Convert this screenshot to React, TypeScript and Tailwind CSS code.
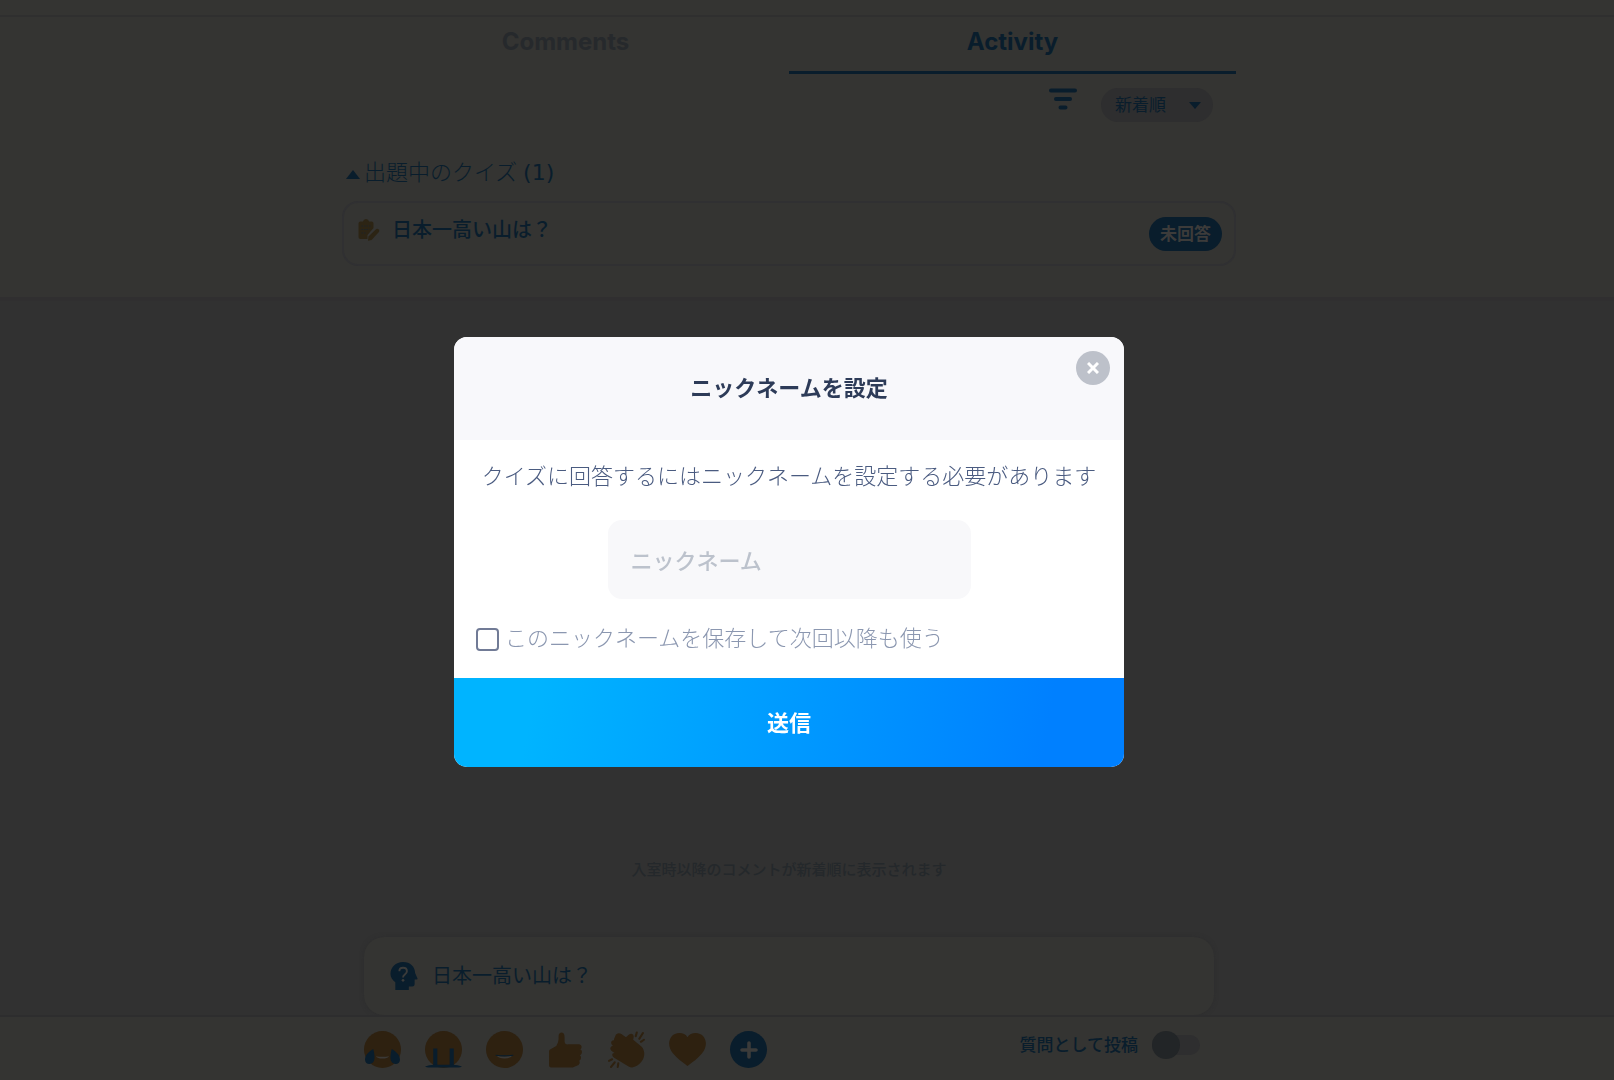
import React from "react";

const reactions = ["tears of joy", "crying", "smile", "thumbs up", "clap", "heart"];

const FACE = "#2e2110";
const BLUE = "#091d2c";

function Reaction({ name }: { name: string }) {
  return (
    <svg viewBox="0 0 36 36" className="size-[37px]" aria-hidden="true">
      {name === "tears of joy" && (
        <>
          <circle cx="18" cy="18" r="18" fill={FACE} />
          <path d="M11.500 24.500q6.500 1 13 0-1.500 2.300-6.500 2.300t-6.500-2.300z" fill="#3b3936" />
          <path d="M9 17.500C5 20 1 23 1 28c0 5 6.500 5.500 8.500 1.500 1.500-3 .5-8-.5-12z" fill={BLUE} />
          <path d="M27 17.500c4 2.500 8 5.500 8 10.500 0 5-6.500 5.500-8.500 1.500-1.500-3-.5-8 .5-12z" fill={BLUE} />
        </>
      )}
      {name === "crying" && (
        <>
          <circle cx="18" cy="18" r="18" fill={FACE} />
          <path d="M8 17h4v16H8zM24 17h4v16h-4z" fill={BLUE} />
          <path d="M0 34.500Q4 33 9 32.800h18q5 .2 9 1.700-2 1.500-5 1H5q-3 .5-5-1z" fill={BLUE} />
        </>
      )}
      {name === "smile" && (
        <>
          <circle cx="18" cy="18" r="18" fill={FACE} />
          <path d="M10.500 24q7.500 1.200 15 0-2 2.700-7.500 2.700T10.500 24z" fill="#3b3936" />
          <path d="M9.500 23.500q8.500 1.400 17 0" fill="none" stroke={BLUE} strokeWidth="1" />
        </>
      )}
      {name === "thumbs up" && (
        <path
          d="M2 20q0-1.500 1-2l6-3.500c1.500-2.500 2.500-5 2.300-9C11 .5 16.500 0 17 4.500c.3 3-.2 5.500.5 7.500q1 1.500 3 1h10.500c3 0 3.500 4 1.300 5 2.500.5 2.200 5-.3 5.500 1.800 1 1.300 5-.8 5.300 1.300 1.500.6 4.500-1.700 4.700L25 35.500H4q-2 0-2-2z"
          fill={FACE}
        />
      )}
      {name === "clap" && (
        <>
          <path
            d="M7 5c1-3 4-3.500 6-2l4.500 3 3-2.500C22.500 2 25 3 25 5.500l-.5 3 8 6.500c4 4 3.500 11 0 15S24.500 37 20 34.500L6 26c-3-2-2-5 .5-4.500-4-2-5-4-3.700-6 .7-1 1.700-1 2.700-.5C1.500 12 3 8.500 6 9 5.500 7.500 6.500 6.500 7 5z"
            fill={FACE}
          />
          <path
            d="M27 5l1-3.500M30.500 7.500l3.500-5.500M32 10.500l3-2M1 29l3-1.500M3 35l3.500-4.500M9.500 35l.5-3.500"
            fill="none"
            stroke={FACE}
            strokeWidth="2"
            strokeLinecap="round"
          />
        </>
      )}
      {name === "heart" && (
        <path
          d="M18 6C15 .8 6 .8 2.300 5.500-1.500 11 0 17 4 22c4 5 9 8.500 14 12 5-3.500 10-7 14-12 4-5 5.500-11 1.700-16.500C30 .8 21 .8 18 6z"
          fill={FACE}
        />
      )}
    </svg>
  );
}

function Header() {
  return (
    <header className="border-b-4 border-[#302f30] bg-[#343432]">
      <div className="h-[17px] border-b-2 border-[#2f2f2f]" />
      <div className="pr-9 pb-[31px]">
        <div className="mx-auto w-full max-w-[894px]">
          <nav className="grid grid-cols-2 font-['Inter'] text-2xl font-bold" role="tablist">
            <button role="tab" aria-selected="false" className="h-[57px] border-b-3 border-transparent pb-1 text-[#26292c]">
              Comments
            </button>
            <button role="tab" aria-selected="true" className="h-[57px] border-b-3 border-[#091d2c] pb-1 text-[#091d2c]">
              Activity
            </button>
          </nav>
          <div className="flex items-start justify-end gap-6 pt-3.5 pr-[23px]">
            <button aria-label="絞り込み">
              <svg viewBox="0 0 28 22" className="h-[22px] w-7" stroke="#091d2c" strokeWidth="4" strokeLinecap="round">
                <path d="M2 2.500h24M7 11h14M11.500 19.500h5" />
              </svg>
            </button>
            <div className="relative">
              <select
                aria-label="並び順"
                className="h-[34px] w-28 appearance-none rounded-full bg-[#2e2e2f] pl-3.5 text-[17px] text-[#091d2c]"
              >
                <option>新着順</option>
              </select>
              <svg viewBox="0 0 12 7" className="pointer-events-none absolute top-3.5 right-3 h-[7px] w-3" fill="#091d2c">
                <path d="M0 0h12L6 7z" />
              </svg>
            </div>
          </div>
          <button className="mt-[31px] flex items-center gap-1 pl-1 text-[22px] leading-9 font-light text-[#091d2c]">
            <svg viewBox="0 0 14 9" className="mt-1 h-[9px] w-3.5" fill="#091d2c">
              <path d="M0 9 7 0l7 9z" />
            </svg>
            <h2>
              出題中のクイズ <span className="font-['DejaVu_Sans'] font-normal">(1)</span>
            </h2>
          </button>
          <article className="mt-2.5 flex h-[65px] items-center rounded-2xl border-2 border-[#303032] pr-3 pl-3.5">
            <svg viewBox="0 0 22 22" className="mb-2 size-[22px]" fill="#2c2414">
              <path d="M2.500 2.500H5Q5.500 0 8 0t3 2.500h2.500q2 0 2 2V9L9.500 16v4H2.500q-2 0-2-2V4.500q0-2 2-2z" />
              <path d="m10.500 17.500 7.500-7.300q1.500-1 2.700.2 1.200 1.300.2 2.600L13.500 21l-3.500.8z" />
              <path
                d="M3.500 7h9M3.500 10.500h8M3.500 14h5"
                stroke="#1c2226"
                strokeWidth="1.200"
                strokeDasharray="1.500 1"
              />
            </svg>
            <h3 className="mb-2 ml-3 grow text-xl font-medium text-[#091d2c]">日本一高い山は？</h3>
            <span className="rounded-full bg-[#091d2c] px-[11px] text-[17px] leading-[34px] font-bold text-[#3c3b3a]">未回答</span>
          </article>
        </div>
      </div>
    </header>
  );
}

function Footer() {
  return (
    <footer className="border-t-2 border-[#2d2d2e] bg-[#343432] pr-9">
      <div className="mx-auto flex w-full max-w-[850px] items-start justify-between pt-3.5 pb-3">
        <div className="flex gap-6">
          {reactions.map((name) => (
            <button key={name} aria-label={name}>
              <Reaction name={name} />
            </button>
          ))}
          <button aria-label="追加" className="flex size-[37px] items-center justify-center rounded-full bg-[#091d2c]">
            <svg viewBox="0 0 18 18" className="size-[18px]" stroke="#3b3b3a" strokeWidth="3.600" strokeLinecap="round">
              <path d="M9 2v14M2 9h14" />
            </svg>
          </button>
        </div>
        <label className="flex items-center gap-3.5 pr-3.5 text-[17px] font-medium text-[#091d2c]">
          質問として投稿
          <span className="relative flex h-7 w-12 items-center">
            <input type="checkbox" role="switch" className="h-5 w-12 appearance-none rounded-full bg-[#2e2e2f]" />
            <span className="absolute left-0 size-7 rounded-full bg-[#222527]" />
          </span>
        </label>
      </div>
    </footer>
  );
}

function NicknameDialog() {
  return (
    <div className="fixed inset-0 flex items-center justify-center pt-6 pr-9">
      <form
        role="dialog"
        aria-modal="true"
        aria-labelledby="nickname-title"
        onSubmit={(e) => e.preventDefault()}
        className="relative w-full max-w-[670px] overflow-hidden rounded-[13px] bg-white"
      >
        <div className="bg-[#f8f8fb] pt-[31px] pb-[33px] text-center">
          <h1 id="nickname-title" className="text-[22px] leading-[39px] font-bold text-[#2d3b58]">
            ニックネームを設定
          </h1>
        </div>
        <button
          type="button"
          aria-label="閉じる"
          className="absolute top-3.5 right-3.5 flex size-[34px] items-center justify-center rounded-full bg-[#bdc1ca]"
        >
          <svg viewBox="0 0 12 12" className="size-3" stroke="#ffffff" strokeWidth="3">
            <path d="m1 1 10 10M11 1 1 11" />
          </svg>
        </button>
        <div className="px-[22px] pt-[17px] pb-[23px]">
          <p className="text-center text-[22px] leading-9 font-light text-[#4a5b80]">
            クイズに回答するにはニックネームを設定する必要があります
          </p>
          <input
            aria-label="ニックネーム"
            placeholder="ニックネーム"
            className="mx-auto mt-[27px] block h-[79px] w-[363px] max-w-full rounded-[14px] bg-[#f8f8fa] px-[23px] text-[22px] font-medium text-[#2d3b58] placeholder:text-[#bcc2cc]"
          />
          <label className="mt-5 flex items-center gap-1.5 text-[22px] leading-9 font-light text-[#8b97b0]">
            <input
              type="checkbox"
              className="mt-1 size-[23px] appearance-none rounded-sm border-2 border-[#717b96] bg-white"
            />
            このニックネームを保存して次回以降も使う
          </label>
        </div>
        <button
          type="submit"
          className="block w-full bg-[linear-gradient(100deg,#00b4ff_12%,#0080ff_88%)] text-[22px] leading-[89px] font-bold text-white"
        >
          送信
        </button>
      </form>
    </div>
  );
}

export default function App() {
  return (
    <div className="flex min-h-screen flex-col bg-[#313131] font-['Noto_Sans','Noto_Sans_CJK_JP',sans-serif]" lang="ja">
      <Header />
      <main className="flex grow flex-col justify-end pr-9">
        <p className="text-center text-[15px] leading-6 font-medium text-[#24282b]">入室時以降のコメントが新着順に表示されます</p>
        <section className="mx-auto mt-14 flex h-[78px] w-full max-w-[850px] items-center rounded-[20px] bg-[#343432] pl-[26px] shadow-[0_0_4px_#2d2d2e]">
          <svg viewBox="0 0 28 29" className="size-7">
            <path
              d="M13 0c7.500 0 12.500 5 12.500 11.500L28 17q.3 1-1 1h-2v5q0 2.500-2.500 2.500H19V29H5v-8C2 18.500 0 16 0 12.500 0 5.500 5.500 0 13 0z"
              fill="#091d2c"
            />
            <path
              d="M9.200 9.500C9.200 7 11 6 13 6s4 1.200 4 3.500c0 3.500-4 3.500-4 6.500"
              fill="none"
              stroke="#3b3b3a"
              strokeWidth="2"
            />
            <circle cx="13" cy="19" r="1.400" fill="#3b3b3a" />
          </svg>
          <h3 className="ml-3.5 text-xl text-[#091d2c]">日本一高い山は？</h3>
        </section>
      </main>
      <Footer />
      <NicknameDialog />
    </div>
  );
}
